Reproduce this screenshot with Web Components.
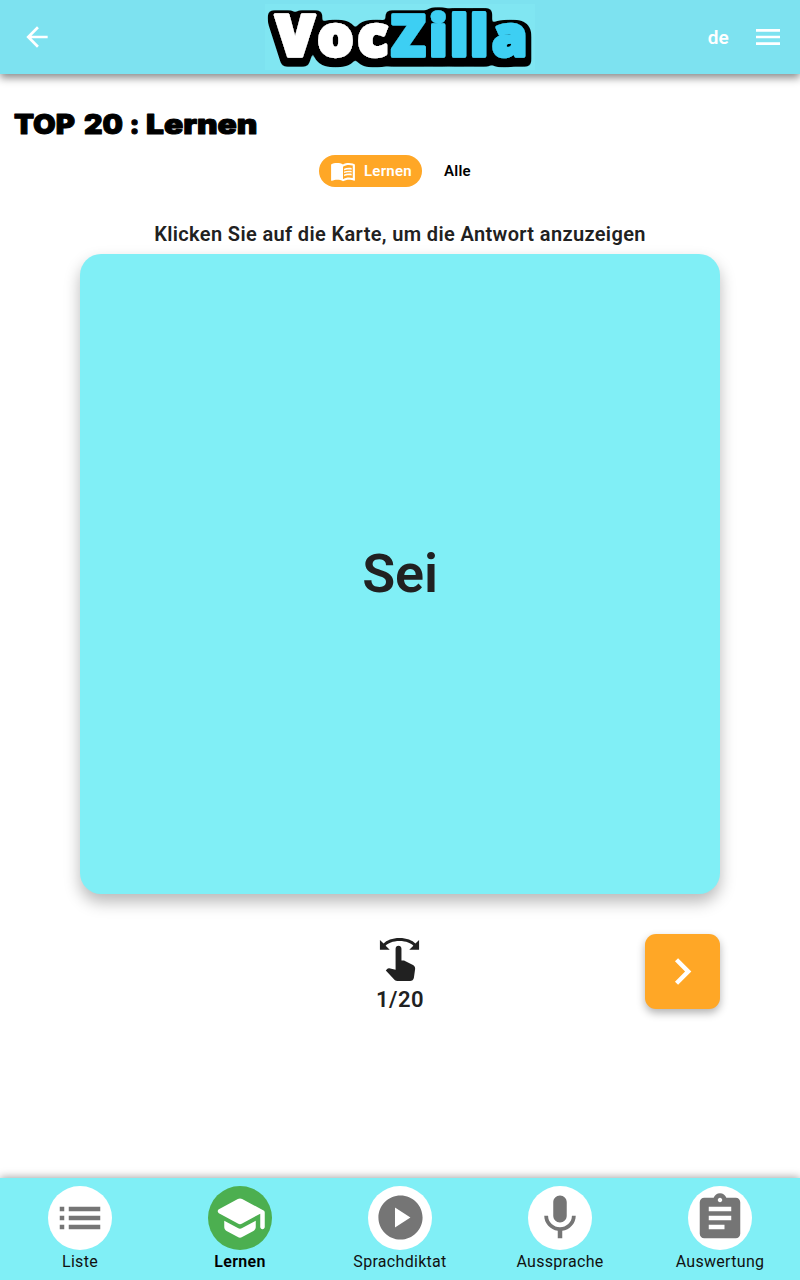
<!DOCTYPE html>
<html lang="de"><head><meta charset="utf-8"><title>VocZilla</title>
<style>html,body{margin:0;height:100%;background:#fff}</style></head><body>
<voc-app></voc-app>
<script>
const define=(name,html,after)=>customElements.define(name,class extends HTMLElement{
  connectedCallback(){
    if(this.shadowRoot)return;
    const t=document.createElement('template');t.innerHTML=html;
    this.attachShadow({mode:'open'}).append(t.content.cloneNode(true));
    if(after)after(this);
  }
});
const icons={
 back:'M20 11H7.83l5.59-5.59L12 4l-8 8 8 8 1.41-1.41L7.83 13H20v-2z',
 menu:'M3 18h18v-2H3v2zm0-5h18v-2H3v2zm0-7v2h18V6H3z',
 book:'M21 5c-1.11-.35-2.33-.5-3.5-.5-1.95 0-4.05.4-5.5 1.5-1.45-1.1-3.55-1.5-5.5-1.5S2.45 4.9 1 6v14.65c0 .25.25.5.5.5.1 0 .15-.05.25-.05C3.1 20.45 5.05 20 6.5 20c1.95 0 4.05.4 5.5 1.5 1.35-.85 3.8-1.5 5.5-1.5 1.65 0 3.35.3 4.75 1.05.1.05.15.05.25.05.25 0 .5-.25.5-.5V6c-.6-.45-1.25-.75-2-1zm0 13.500c-1.100-.350-2.300-.500-3.500-.500-1.700 0-4.150.650-5.500 1.500V8c1.350-.850 3.800-1.500 5.500-1.500 1.200 0 2.400.150 3.500.500v11.500z M17.500 10.500c.88 0 1.730.090 2.500.260V9.240c-.790-.150-1.640-.240-2.500-.240-1.700 0-3.240.290-4.500.830v1.660c1.130-.640 2.700-.990 4.500-.990zM13 12.490v1.660c1.130-.640 2.700-.990 4.500-.990.880 0 1.730.090 2.500.260V11.900c-.790-.150-1.640-.240-2.500-.240-1.700 0-3.240.300-4.500.830zm4.500 1.840c-1.700 0-3.240.290-4.500.830v1.660c1.130-.640 2.700-.990 4.500-.990.880 0 1.730.090 2.500.260v-1.520c-.790-.160-1.640-.240-2.500-.240z',
 next:'M10 6 8.590 7.410 13.170 12l-4.580 4.590L10 18l6-6z',
 swipe:'M18.890 14.750l-4.090-2.040c-.280-.140-.580-.210-.890-.210H13v-6C13 5.670 12.330 5 11.500 5S10 5.670 10 6.500v10.740l-3.250-.740c-.330-.070-.680.030-.920.280L5 17.620l4.540 4.790c.380.380 1.140.590 1.670.590h6.160c1 0 1.840-.730 1.980-1.720l.630-4.460c.120-.850-.320-1.680-1.090-2.070zM20.130 3.870C18.690 2.170 15.600 1 12 1S5.310 2.170 3.870 3.870L2 2v5h5L4.930 4.930c1-1.290 3.700-2.430 7.070-2.430s6.070 1.140 7.070 2.430L17 7h5V2l-1.870 1.870z',
 list:'M3 13h2v-2H3v2zm0 4h2v-2H3v2zm0-8h2V7H3v2zm4 4h14v-2H7v2zm0 4h14v-2H7v2zM7 7v2h14V7H7z',
 school:'M5 13.180v2.810c0 .730.400 1.410 1.040 1.760l5 2.730c.600.330 1.320.330 1.920 0l5-2.730c.640-.350 1.040-1.030 1.040-1.760v-2.810l-6.040 3.300c-.600.330-1.320.330-1.920 0L5 13.180zm6.040-9.660l-8.430 4.600c-.690.380-.690 1.380 0 1.760l8.430 4.600c.600.330 1.320.330 1.920 0L21 10.090V16c0 .550.450 1 1 1s1-.450 1-1V9.590c0-.370-.200-.700-.520-.880l-9.520-5.190c-.600-.320-1.320-.320-1.920 0z',
 play:'M12 2C6.480 2 2 6.480 2 12s4.480 10 10 10 10-4.480 10-10S17.520 2 12 2zM9.500 16.500v-9l7 4.500-7 4.500z',
 mic:'M12 14c1.660 0 2.990-1.340 2.990-3L15 5c0-1.660-1.340-3-3-3S9 3.340 9 5v6c0 1.660 1.340 3 3 3zm5.300-3c0 3-2.540 5.100-5.300 5.100S6.700 14 6.700 11H5c0 3.410 2.720 6.230 6 6.720V21h2v-3.280c3.280-.480 6-3.300 6-6.720h-1.700z',
 task:'M19 3h-4.180C14.400 1.840 13.300 1 12 1s-2.400.840-2.820 2H5c-1.100 0-2 .900-2 2v14c0 1.100.900 2 2 2h14c1.100 0 2-.900 2-2V5c0-1.100-.900-2-2-2zm-7 0c.550 0 1 .450 1 1s-.450 1-1 1-1-.450-1-1 .450-1 1-1zm2 14H7v-2h7v2zm3-4H7v-2h10v2zm0-4H7V7h10v2z'};
define('voc-icon','<style>:host{display:block;flex:none}svg{display:block;fill:currentColor}</style><svg viewBox="0 0 24 24"><path/></svg>',e=>{
  const s=e.shadowRoot.querySelector('svg');s.setAttribute('width',e.getAttribute('size'));s.setAttribute('height',e.getAttribute('size'));
  s.firstChild.setAttribute('d',icons[e.getAttribute('name')]);
});
define('voc-logo',`<style>:host{display:block;width:270px;height:66px;background:#80e6f2}svg{display:block;overflow:visible;font:800 56.500px "Open Sans",sans-serif;stroke-linejoin:round}
.v{fill:#fff;stroke:#fff;stroke-width:3.500}.z{fill:#3dcff3;stroke:#3dcff3;stroke-width:3.500}</style>
<svg width="270" height="66" viewBox="265 4 270 66">
<defs><filter id="outline" filterUnits="userSpaceOnUse" x="255" y="-6" width="290" height="86">
<feMorphology in="SourceAlpha" operator="dilate" radius="4"/><feGaussianBlur stdDeviation="2.200"/>
<feComponentTransfer><feFuncA type="linear" slope="8" intercept="-1.100"/></feComponentTransfer><feOffset dy="3" result="o"/>
<feMerge><feMergeNode in="o"/><feMergeNode in="SourceGraphic"/></feMerge></filter></defs>
<g filter="url(#outline)"><text class="v" y="56" x="275.500 317.500 357.500">Voc</text><text class="z" y="56" x="391 429 450 470 492">Zilla</text></g></svg>`);
define('voc-header',`<style>:host{display:grid;grid-template-columns:1fr 270px 1fr;align-items:center;height:74px;flex:none;background:#7de2f0;color:#fff;box-shadow:0 4px 8px rgba(0,0,0,.45);font:600 19px Roboto,sans-serif;z-index:1}
.l{padding-left:21px}.r{display:flex;align-items:center;justify-content:flex-end;gap:23px;padding-right:16px;letter-spacing:.2px}</style>
<div class="l"><voc-icon name="back" size="32"></voc-icon></div><voc-logo></voc-logo><div class="r"><span>de</span><voc-icon name="menu" size="32"></voc-icon></div>`);
define('voc-title',`<style>:host{display:block;height:40px}svg{display:block;font:900 27px Inter,sans-serif;stroke:#000;stroke-width:1;stroke-linejoin:round}</style>
<svg width="300" height="40"><text y="29" lengthAdjust="spacingAndGlyphs"><tspan x="14" textLength="61" lengthAdjust="spacingAndGlyphs">TOP</tspan> <tspan x="84" textLength="39" lengthAdjust="spacingAndGlyphs">20</tspan> <tspan x="129.500">:</tspan> <tspan x="146" textLength="111.500" lengthAdjust="spacingAndGlyphs">Lernen</tspan></text></svg>`);
define('voc-tabs',`<style>:host{display:flex;align-items:center;margin:10px 0 0 319px;font:600 15px Roboto,sans-serif;letter-spacing:.25px;color:#000}
.on{box-sizing:border-box;width:103px;height:32px;border-radius:16px;background:#ffa726;color:#fff;display:flex;align-items:center;gap:8px;padding-left:11px}.off{margin-left:22px}</style>
<div class="on"><voc-icon name="book" size="26"></voc-icon><span>Lernen</span></div><span class="off">Alle</span>`);
define('voc-card',`<style>:host{box-sizing:border-box;display:flex;align-items:center;justify-content:center;width:640px;height:640px;padding-bottom:1px;border-radius:21px;background:#80eff6;box-shadow:0 8px 16px rgba(0,0,0,.28);font:600 54px Roboto,sans-serif;letter-spacing:-.2px;color:#212121}</style><slot></slot>`);
define('voc-controls',`<style>:host{display:grid;grid-template-columns:1fr auto 1fr;width:640px;margin-top:40px;color:#212121;font:600 22px/26px Roboto,sans-serif}
.c{grid-column:2;display:flex;flex-direction:column;align-items:center;letter-spacing:.5px}.c voc-icon{margin:2px 2px 4px 0}
button{box-sizing:border-box;width:75px;height:75px;border:0;padding:0;border-radius:11px;background:#ffa726;color:#fff;justify-self:end;display:flex;align-items:center;justify-content:center;box-shadow:0 4px 8px rgba(0,0,0,.3)}</style>
<div class="c"><voc-icon name="swipe" size="47"></voc-icon><span>1/20</span></div><button aria-label="Weiter"><voc-icon name="next" size="53"></voc-icon></button>`);
define('voc-nav-item',`<style>:host{display:flex;flex-direction:column;align-items:center;padding-top:8px;font:400 16px/24px Roboto,sans-serif;letter-spacing:.3px;color:#111}
.d{width:64px;height:64px;border-radius:50%;background:#fff;color:#757575;display:flex;align-items:center;justify-content:center}
:host([active]){font-weight:600;color:#000}:host([active]) .d{background:#4caf50;color:#fff}</style><div class="d"></div><slot></slot>`,e=>{
  const i=document.createElement('voc-icon');i.setAttribute('name',e.getAttribute('icon'));i.setAttribute('size',e.getAttribute('size'));e.shadowRoot.querySelector('.d').append(i);
});
define('voc-nav',`<style>:host{display:grid;grid-template-columns:repeat(5,1fr);height:102.500px;flex:none;background:#80eff6;box-shadow:0 -1px 8px rgba(0,0,0,.35)}</style>
<voc-nav-item icon="list" size="54">Liste</voc-nav-item><voc-nav-item icon="school" size="54" active>Lernen</voc-nav-item><voc-nav-item icon="play" size="53">Sprachdiktat</voc-nav-item><voc-nav-item icon="mic" size="54">Aussprache</voc-nav-item><voc-nav-item icon="task" size="54">Auswertung</voc-nav-item>`);
define('voc-app',`<style>:host{display:flex;flex-direction:column;height:1280px;width:800px;overflow:hidden;background:#fff;font-family:Roboto,sans-serif}
main{flex:1;padding-top:30.500px}.study{display:flex;flex-direction:column;align-items:center;margin-top:33px}
.hint{font:600 20px/28px Roboto,sans-serif;letter-spacing:.36px;color:#212121;margin-bottom:6.500px}</style>
<voc-header></voc-header><main><voc-title></voc-title><voc-tabs></voc-tabs><div class="study"><div class="hint">Klicken Sie auf die Karte, um die Antwort anzuzeigen</div><voc-card>Sei</voc-card><voc-controls></voc-controls></div></main><voc-nav></voc-nav>`);
</script></body></html>
